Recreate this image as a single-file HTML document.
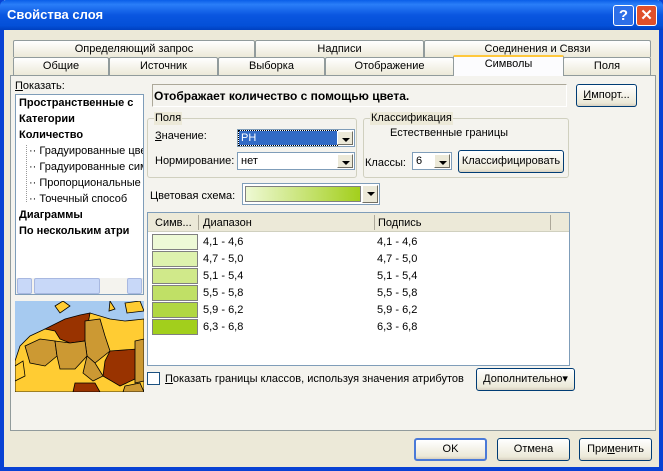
<!DOCTYPE html>
<html><head><meta charset="utf-8"><style>
*{box-sizing:border-box}
body{margin:0;width:663px;height:471px;overflow:hidden;font-family:"Liberation Sans",sans-serif;font-size:11px;color:#000;background:#ece9d8;position:relative}
.a{position:absolute}
.t{position:absolute;white-space:nowrap;line-height:13px}
.btn{position:absolute;background:linear-gradient(#fff,#ece9d8 85%,#d6d0c0);border:1px solid #003c74;border-radius:3px;text-align:center;line-height:21px}
.grp{position:absolute;border:1px solid #d0d0bf;border-radius:3px}
.lg{position:absolute;background:#ece9d8;padding:0 1px;top:-7px;left:6px;line-height:13px}
.cb{position:absolute;background:#fff;border:1px solid #7f9db9}
.dd{position:absolute;right:1px;top:1px;bottom:1px;width:16px;background:#ece9d8;border:1px solid;border-color:#fff #716f64 #716f64 #fff}
.dd:after{content:"";position:absolute;left:4px;top:6px;border:4px solid transparent;border-top:4px solid #000;border-bottom:0}
.tab{position:absolute;border:1px solid #919b9c;border-bottom:none;background:linear-gradient(#fff,#ece9d8);text-align:center;line-height:17px;border-radius:2px 2px 0 0}
.sw{position:absolute;left:4px;width:46px;height:16px;border:1px solid #808080}
</style></head><body>
<div class="a" style="left:0;top:0;width:663px;height:471px;border:4px solid #0842d4;border-top:none;background:#ece9d8"></div>
<div class="a" style="left:0;top:0;width:663px;height:30px;background:linear-gradient(#0a5ee8,#2a7ef8 15%,#0a56e0 50%,#0450d8 85%,#0040c0);border-radius:6px 6px 0 0"></div>
<div class="t" style="left:7px;top:8px;color:#fff;font-weight:bold;font-size:13px">Свойства слоя</div>
<div class="a" style="left:613px;top:5px;width:21px;height:21px;border:1px solid #fff;border-radius:3px;background:#2d6fe8;color:#fff;font-weight:bold;font-size:15px;text-align:center;line-height:19px">?</div>
<div class="a" style="left:636px;top:5px;width:21px;height:21px;border:1px solid #fff;border-radius:3px;background:#e0502a;color:#fff;font-weight:bold;font-size:15px;text-align:center;line-height:19px">✕</div>

<div class="tab" style="left:13px;top:40px;width:242px;height:17px">Определяющий запрос</div>
<div class="tab" style="left:255px;top:40px;width:169px;height:17px">Надписи</div>
<div class="tab" style="left:424px;top:40px;width:227px;height:17px">Соединения и Связи</div>
<div class="tab" style="left:13px;top:57px;width:96px;height:18px">Общие</div>
<div class="tab" style="left:109px;top:57px;width:109px;height:18px">Источник</div>
<div class="tab" style="left:218px;top:57px;width:107px;height:18px">Выборка</div>
<div class="tab" style="left:325px;top:57px;width:129px;height:18px">Отображение</div>
<div class="tab" style="left:563px;top:57px;width:88px;height:18px">Поля</div>
<div class="a" style="left:10px;top:75px;width:646px;height:356px;border:1px solid #919b9c;background:#f4f3ee"></div>
<div class="tab" style="left:453px;top:55px;width:111px;height:21px;background:#fcfcfe;border-top:2px solid #ffc83c;line-height:14px">Символы</div>

<div class="t" style="left:15px;top:80px"><u>П</u>оказать:</div>
<div class="a" style="left:15px;top:94px;width:129px;height:201px;background:#fff;border:1px solid #7f9db9;overflow:hidden">
<div class="t" style="left:3px;top:2px;font-weight:bold">Пространственные с</div>
<div class="t" style="left:3px;top:18px;font-weight:bold">Категории</div>
<div class="t" style="left:3px;top:34px;font-weight:bold">Количество</div>
<div class="a" style="left:10px;top:50px;height:57px;border-left:1px dotted #999"></div>
<div class="t" style="left:13px;top:50px">·· Градуированные цве</div>
<div class="t" style="left:13px;top:66px">·· Градуированные сим</div>
<div class="t" style="left:13px;top:82px">·· Пропорциональные</div>
<div class="t" style="left:13px;top:98px">·· Точечный способ</div>
<div class="t" style="left:3px;top:114px;font-weight:bold">Диаграммы</div>
<div class="t" style="left:3px;top:130px;font-weight:bold">По нескольким атри</div>
<div class="a" style="left:0;top:183px;width:127px;height:16px;background:#f4f3ee">
<div class="a" style="left:1px;top:0;width:15px;height:16px;background:#c8d8f8;border:1px solid #a8b8e0;border-radius:2px"></div>
<div class="a" style="left:18px;top:0;width:66px;height:16px;background:#c8d8f8;border:1px solid #a8b8e0;border-radius:2px"></div>
<div class="a" style="left:111px;top:0;width:15px;height:16px;background:#c8d8f8;border:1px solid #a8b8e0;border-radius:2px"></div>
</div></div>
<svg class="a" style="left:15px;top:301px" width="129" height="91" viewBox="0 0 129 91">
<rect width="129" height="91" fill="#a6caf0"/>
<g stroke="#000" stroke-width="0.8">
<path d="M0 60 L5 45 L15 35 L30 28 L40 25 L60 20 L75 12 L95 18 L110 20 L129 18 L129 91 L0 91Z" fill="#ffcc33"/>
<path d="M30 28 L50 18 L65 14 L75 12 L70 40 L55 42 L45 38 L40 30Z" fill="#993300"/>
<path d="M70 20 L85 18 L90 35 L95 50 L80 62 L72 55 L70 40Z" fill="#cc9933"/>
<path d="M10 45 L25 38 L40 40 L42 55 L30 65 L15 62Z" fill="#cc9933"/>
<path d="M40 40 L55 42 L70 40 L72 55 L60 68 L45 68 L42 55Z" fill="#cc9933"/>
<path d="M95 50 L122 48 L120 78 L105 85 L88 75 L90 60Z" fill="#993300"/>
<path d="M120 40 L129 38 L129 80 L120 82Z" fill="#cc9933"/>
<path d="M72 55 L80 62 L88 75 L78 80 L68 72Z" fill="#cc9933"/>
<path d="M60 82 L80 82 L85 91 L58 91Z" fill="#993300"/>
<path d="M110 85 L125 82 L129 91 L108 91Z" fill="#cc9933"/>
<path d="M0 65 L8 60 L10 75 L0 80Z" fill="#ffcc33"/>
<path d="M40 5 L48 0 L55 5 L45 12Z" fill="#ffcc33"/>
<path d="M95 0 L100 8 L94 10Z" fill="#ffcc33"/>
<path d="M110 2 L125 0 L129 10 L112 12Z" fill="#ffcc33"/>
</g></svg>

<div class="a" style="left:152px;top:84px;width:415px;height:23px;border:1px solid;border-color:#aca899 #fff #fff #aca899"></div>
<div class="t" style="left:154px;top:90px;font-weight:bold;font-size:12px">Отображает количество с помощью цвета.</div>
<div class="btn" style="left:576px;top:84px;width:61px;height:23px"><u>И</u>мпорт...</div>

<div class="grp" style="left:147px;top:118px;width:210px;height:60px"><div class="lg">Поля</div></div>
<div class="t" style="left:155px;top:130px"><u>З</u>начение:</div>
<div class="cb" style="left:237px;top:129px;width:118px;height:18px"><div class="a" style="left:1px;top:1px;width:98px;height:14px;background:#316ac5;color:#fff;line-height:14px;padding-left:2px;outline:1px dotted #000">PH</div><div class="dd"></div></div>
<div class="t" style="left:155px;top:155px">Нормирование:</div>
<div class="cb" style="left:237px;top:152px;width:118px;height:18px"><div class="t" style="left:3px;top:2px">нет</div><div class="dd"></div></div>

<div class="grp" style="left:363px;top:118px;width:206px;height:60px"><div class="lg">Классификация</div></div>
<div class="t" style="left:390px;top:127px">Естественные границы</div>
<div class="t" style="left:365px;top:157px">Классы:</div>
<div class="cb" style="left:412px;top:152px;width:40px;height:18px"><div class="t" style="left:3px;top:2px">6</div><div class="dd"></div></div>
<div class="btn" style="left:458px;top:150px;width:106px;height:23px">Классифицировать</div>

<div class="t" style="left:150px;top:190px">Цветовая схема:</div>
<div class="cb" style="left:242px;top:183px;width:138px;height:22px"><div class="a" style="left:2px;top:2px;width:116px;height:16px;background:linear-gradient(90deg,#eef9d4,#a3cf1c);border:1px solid #808080"></div><div class="dd"></div></div>

<div class="a" style="left:147px;top:212px;width:423px;height:154px;background:#fff;border:1px solid #7f9db9">
<div class="a" style="left:0;top:0;width:421px;height:19px;background:#ece9d8;border-bottom:1px solid #d0d0bf"></div>
<div class="a" style="left:50px;top:2px;height:15px;border-left:1px solid #aca899"></div>
<div class="a" style="left:226px;top:2px;height:15px;border-left:1px solid #aca899"></div>
<div class="a" style="left:402px;top:2px;height:15px;border-left:1px solid #aca899"></div>
<div class="t" style="left:7px;top:4px">Симв...</div>
<div class="t" style="left:55px;top:4px">Диапазон</div>
<div class="t" style="left:230px;top:4px">Подпись</div>
<div class="sw" style="top:21px;background:#eefad6"></div><div class="t" style="left:55px;top:23px">4,1 - 4,6</div><div class="t" style="left:229px;top:23px">4,1 - 4,6</div>
<div class="sw" style="top:38px;background:#def2ae"></div><div class="t" style="left:55px;top:40px">4,7 - 5,0</div><div class="t" style="left:229px;top:40px">4,7 - 5,0</div>
<div class="sw" style="top:55px;background:#d0e98a"></div><div class="t" style="left:55px;top:57px">5,1 - 5,4</div><div class="t" style="left:229px;top:57px">5,1 - 5,4</div>
<div class="sw" style="top:72px;background:#c0e066"></div><div class="t" style="left:55px;top:74px">5,5 - 5,8</div><div class="t" style="left:229px;top:74px">5,5 - 5,8</div>
<div class="sw" style="top:89px;background:#b1d742"></div><div class="t" style="left:55px;top:91px">5,9 - 6,2</div><div class="t" style="left:229px;top:91px">5,9 - 6,2</div>
<div class="sw" style="top:106px;background:#a2cf1c"></div><div class="t" style="left:55px;top:108px">6,3 - 6,8</div><div class="t" style="left:229px;top:108px">6,3 - 6,8</div>
</div>

<div class="a" style="left:147px;top:372px;width:13px;height:13px;background:#fff;border:1px solid #1c5180"></div>
<div class="t" style="left:165px;top:373px"><u>П</u>оказать границы классов, используя значения атрибутов</div>
<div class="btn" style="left:476px;top:368px;width:99px;height:23px"><u>Д</u>ополнительно▾</div>

<div class="btn" style="left:414px;top:438px;width:73px;height:23px;border:2px solid #4a7ad8;line-height:19px">OK</div>
<div class="btn" style="left:497px;top:438px;width:73px;height:23px">Отмена</div>
<div class="btn" style="left:579px;top:438px;width:73px;height:23px">При<u>м</u>енить</div>
</body></html>
